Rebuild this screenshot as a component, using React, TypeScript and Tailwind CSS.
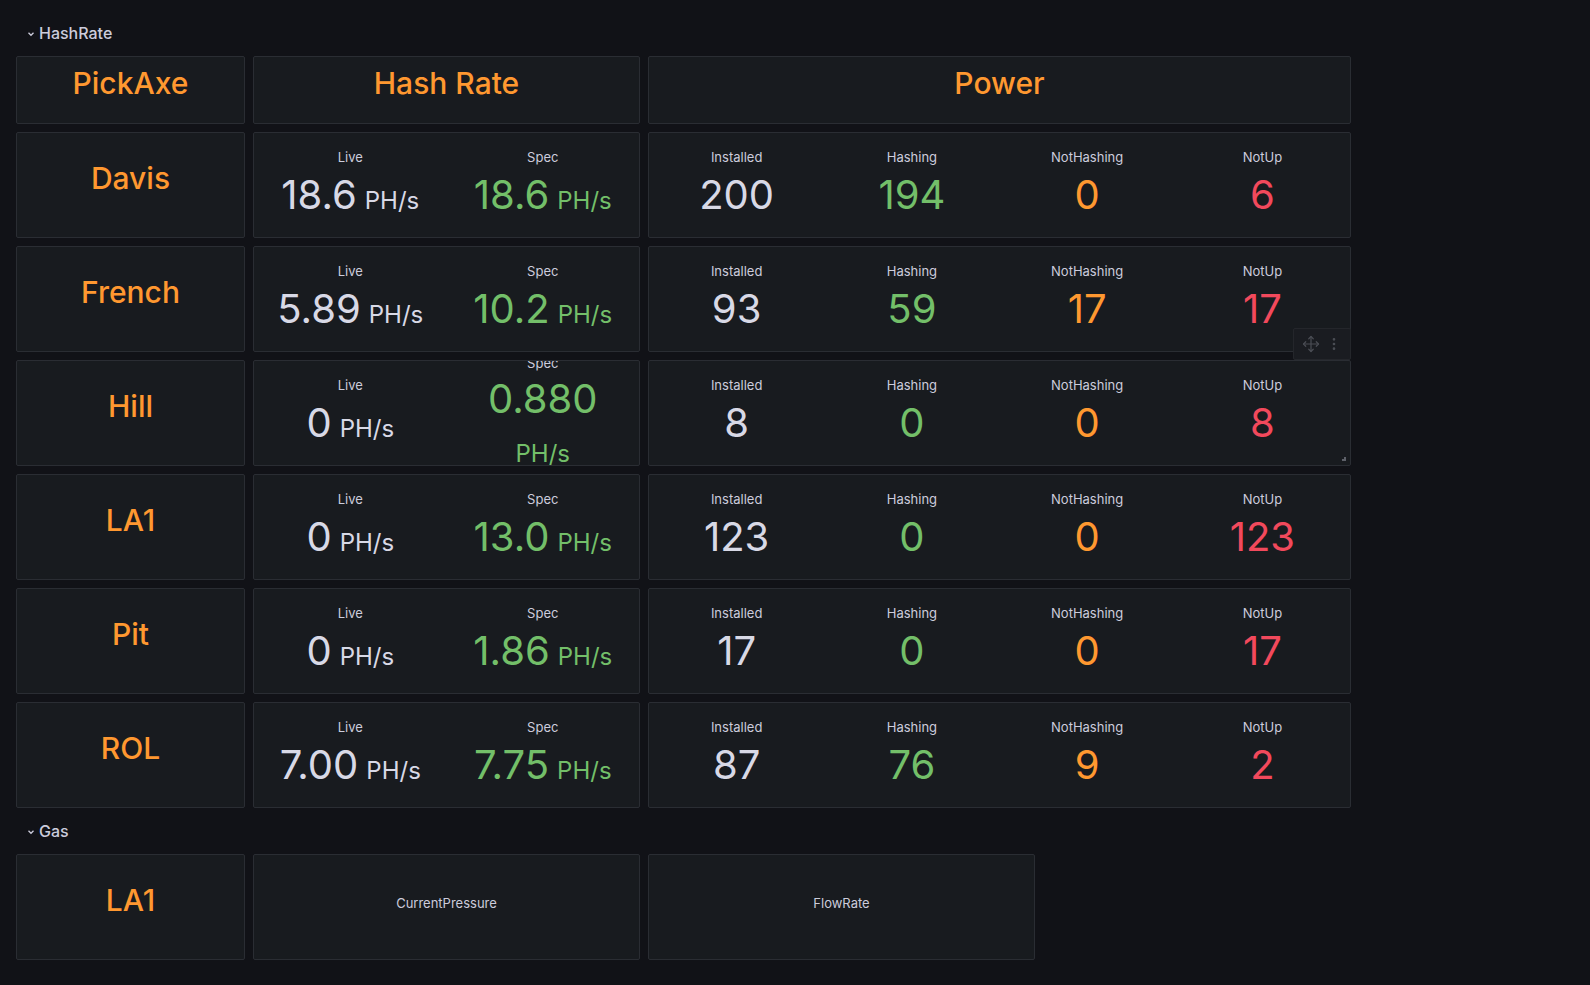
import { Move, EllipsisVertical } from "lucide-react";

type Site = {
  name: string;
  live: string;
  spec: string;
  installed: string;
  hashing: string;
  notHashing: string;
  notUp: string;
  specWrap?: boolean;
};

const sites: Site[] = [
  { name: "Davis", live: "18.6", spec: "18.6", installed: "200", hashing: "194", notHashing: "0", notUp: "6" },
  { name: "French", live: "5.89", spec: "10.2", installed: "93", hashing: "59", notHashing: "17", notUp: "17" },
  { name: "Hill", live: "0", spec: "0.880", installed: "8", hashing: "0", notHashing: "0", notUp: "8", specWrap: true },
  { name: "LA1", live: "0", spec: "13.0", installed: "123", hashing: "0", notHashing: "0", notUp: "123" },
  { name: "Pit", live: "0", spec: "1.86", installed: "17", hashing: "0", notHashing: "0", notUp: "17" },
  { name: "ROL", live: "7.00", spec: "7.75", installed: "87", hashing: "76", notHashing: "9", notUp: "2" },
];

const font = { fontFamily: "Inter, 'Noto Sans', sans-serif" };

function RowHeader({ title }: { title: string }) {
  return (
    <div className="h-[30px] mb-2 flex items-center pl-[10px] text-[#ccccdc]">
      <svg width="10" height="10" viewBox="0 0 10 10" className="mr-[3px] mt-[2px]">
        <path d="M2.5 3.8 L5 6.3 L7.5 3.8" fill="none" stroke="currentColor" strokeWidth="1.3" />
      </svg>
      <span className="text-[16px] font-medium -mt-[1px]">{title}</span>
    </div>
  );
}

function Panel({ className = "", children }: { className?: string; children?: React.ReactNode }) {
  return (
    <div className={`relative bg-[#181b1f] border border-[#2a2d33] rounded-[2px] ${className}`}>
      {children}
    </div>
  );
}

function TitlePanel({ text, tall = true, width = "w-[229px]" }: { text: string; tall?: boolean; width?: string }) {
  return (
    <Panel className={`${width} ${tall ? "h-[106px]" : "h-[68px]"}`}>
      <div className="h-full flex items-center justify-center pb-[14px] text-[30px] font-medium text-[#ff9830]">
        {text}
      </div>
    </Panel>
  );
}

function Stat({
  label,
  value,
  color,
  unit,
  wrap,
}: {
  label: string;
  value: string;
  color: string;
  unit?: boolean;
  wrap?: boolean;
}) {
  return (
    <div className={`flex-1 min-w-0 h-full flex flex-col items-center justify-center ${wrap ? "pt-[10px]" : ""}`}>
      <div className="text-[13px] leading-[20px] text-[#ccccdc]">{label}</div>
      {wrap ? (
        <div className={`flex flex-col items-center ${color}`}>
          <span className="text-[40px] leading-[52px]">{value}</span>
          <span className="text-[24px] leading-[58px]">PH/s</span>
        </div>
      ) : (
        <div className={`flex items-baseline h-[56px] ${color}`}>
          <span className="text-[40px] leading-[56px]">{value}</span>
          {unit && <span className="text-[24px] leading-none ml-[8px]">PH/s</span>}
        </div>
      )}
    </div>
  );
}

export default function App() {
  return (
    <div className="min-h-[985px] w-full bg-[#111217] px-4 pt-[18px]" style={font}>
      <RowHeader title="HashRate" />
      <div className="flex flex-col gap-2">
        <div className="flex gap-2">
          <TitlePanel text="PickAxe" tall={false} />
          <TitlePanel text="Hash Rate" tall={false} width="w-[387px]" />
          <TitlePanel text="Power" tall={false} width="w-[703px]" />
        </div>
        {sites.map((s) => (
          <div key={s.name} className="flex gap-2">
            <TitlePanel text={s.name} />
            <Panel className="w-[387px] h-[106px]">
              <div className="h-full flex overflow-hidden">
                <Stat label="Live" value={s.live} color="text-[#d8d9e6]" unit />
                <Stat label="Spec" value={s.spec} color="text-[#73bf69]" unit wrap={s.specWrap} />
              </div>
            </Panel>
            <Panel className="w-[703px] h-[106px]">
              <div className="h-full flex overflow-hidden">
                <Stat label="Installed" value={s.installed} color="text-[#d8d9e6]" />
                <Stat label="Hashing" value={s.hashing} color="text-[#73bf69]" />
                <Stat label="NotHashing" value={s.notHashing} color="text-[#ff9830]" />
                <Stat label="NotUp" value={s.notUp} color="text-[#f2495c]" />
              </div>
              {s.specWrap && (
                <>
                  <div className="absolute -top-[33px] -right-px w-[58px] h-[32px] z-10 flex items-center justify-between px-[8px] bg-[#1a1c21] border border-[#24262b] rounded-[2px] text-[#4a4d54]">
                    <Move size={18} strokeWidth={1.6} />
                    <EllipsisVertical size={16} strokeWidth={2} />
                  </div>
                  <div className="absolute right-[4px] bottom-[4px] w-[4px] h-[4px] border-r-2 border-b-2 border-[#5d6068]" />
                </>
              )}
            </Panel>
          </div>
        ))}
      </div>
      <div className="mt-2">
        <RowHeader title="Gas" />
        <div className="flex gap-2">
          <TitlePanel text="LA1" />
          <Panel className="w-[387px] h-[106px]">
            <div className="h-full flex items-center justify-center pb-[6px] text-[13px] text-[#ccccdc]">CurrentPressure</div>
          </Panel>
          <Panel className="w-[387px] h-[106px]">
            <div className="h-full flex items-center justify-center pb-[6px] text-[13px] text-[#ccccdc]">FlowRate</div>
          </Panel>
        </div>
      </div>
    </div>
  );
}
